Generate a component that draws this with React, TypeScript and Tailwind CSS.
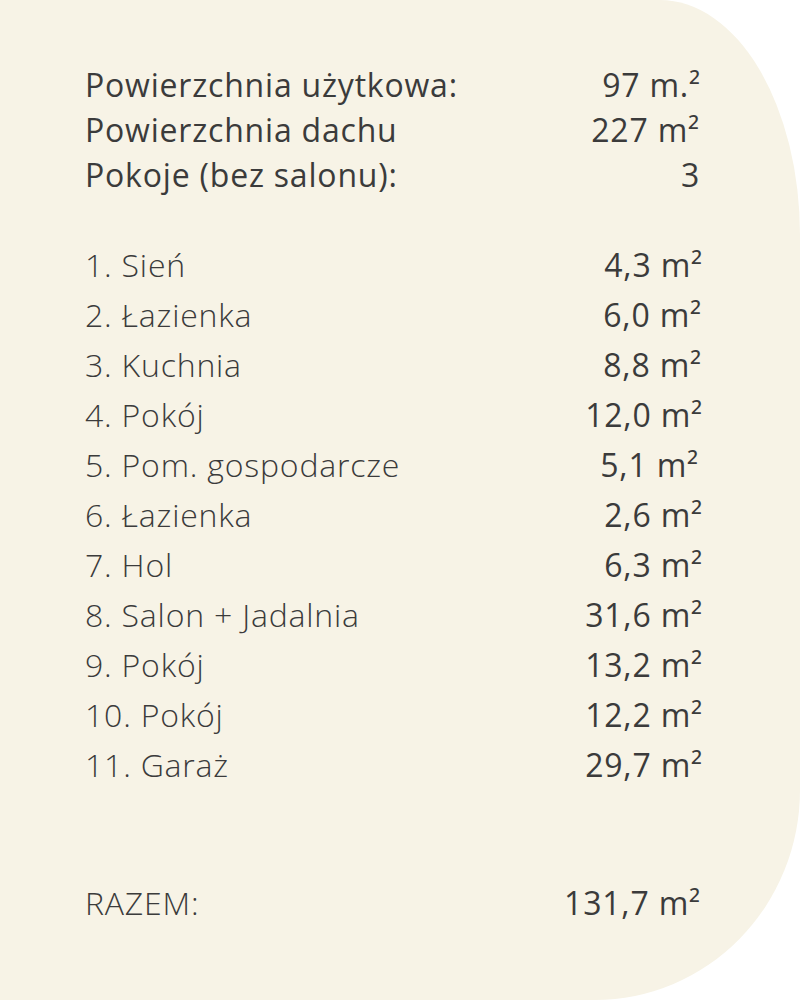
import React from "react";

const top = [
  { l: "Powierzchnia użytkowa:", v: "97 m.²", pr: "pr-[2px]" },
  { l: "Powierzchnia dachu", v: "227 m²", pr: "pr-[3px]" },
  { l: "Pokoje (bez salonu):", v: "3", pr: "pr-[3px]" },
];

const rooms = [
  { l: "1. Sień", v: "4,3 m²", pr: "pr-0" },
  { l: "2. Łazienka", v: "6,0 m²", pr: "pr-[1px]" },
  { l: "3. Kuchnia", v: "8,8 m²", pr: "pr-[1px]" },
  { l: "4. Pokój", v: "12,0 m²", pr: "pr-0" },
  { l: "5. Pom. gospodarcze", v: "5,1 m²", pr: "pr-[4px]" },
  { l: "6. Łazienka", v: "2,6 m²", pr: "pr-0" },
  { l: "7. Hol", v: "6,3 m²", pr: "pr-0" },
  { l: "8. Salon + Jadalnia", v: "31,6 m²", pr: "pr-0" },
  { l: "9. Pokój", v: "13,2 m²", pr: "pr-0" },
  { l: "10. Pokój", v: "12,2 m²", pr: "pr-0" },
  { l: "11. Garaż", v: "29,7 m²", pr: "pr-0" },
];

export default function App() {
  return (
    <div className="w-[800px] h-[1000px] bg-white overflow-hidden">
      <div
        className="w-[800px] h-[1000px] bg-[#f7f3e6] rounded-tr-[140px_235px] rounded-br-[205px_210px] text-[#3b3b3b] pl-[85px] pr-[97px] pt-[62px]"
        style={{ fontFamily: '"Open Sans", "Noto Sans", sans-serif' }}
      >
        <div className="flex flex-col">
          {top.map((r) => (
            <div key={r.l} className="flex justify-between items-center h-[45px] text-[32px] tracking-[0.8px] font-medium">
              <span>{r.l}</span>
              <span className={r.pr}>{r.v}</span>
            </div>
          ))}
        </div>
        <div className="flex flex-col mt-[43px]">
          {rooms.map((r) => (
            <div key={r.l} className="flex justify-between items-center h-[50px] text-[32px] tracking-[0.8px]">
              <span className="font-light">{r.l}</span>
              <span className={"font-medium " + r.pr}>{r.v}</span>
            </div>
          ))}
        </div>
        <div className="flex justify-between items-center h-[50px] text-[32px] tracking-[0.8px] mt-[88px]">
          <span className="font-light">RAZEM:</span>
          <span className="font-medium pr-[2px]">131,7 m²</span>
        </div>
      </div>
    </div>
  );
}
